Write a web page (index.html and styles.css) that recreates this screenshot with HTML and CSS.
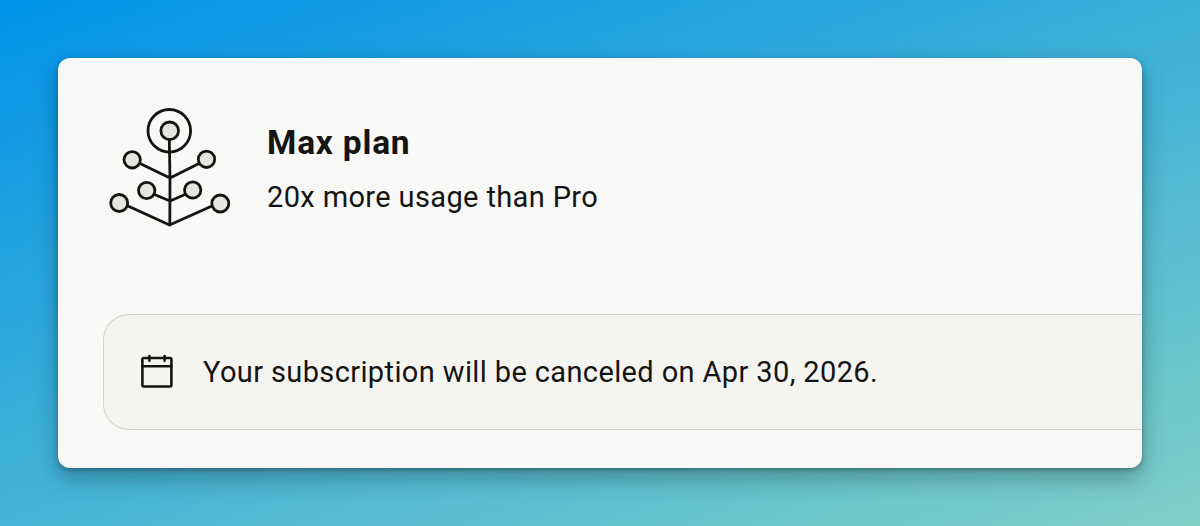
FILE: index.html
```html
<!DOCTYPE html>
<html lang="en">
<head>
	<meta charset="utf-8">
	<title>Max plan</title>
	<link rel="stylesheet" href="styles.css">
</head>
<body>
	<main class="card">
		<header class="plan">
			<svg class="plan-icon" viewBox="0 0 140 135" fill="none" stroke="#141412" stroke-width="2.8" stroke-linecap="round" stroke-linejoin="round">
				<path d="M69.3 40 70 78 69.8 125M40 63.5 70 78 98 64M54.5 94.5 70 101 85 94.5M28 106 69.5 125 112 106" />
				<circle cx="69.3" cy="30.8" r="21.3" />
				<g fill="#e6e5e2">
					<circle cx="69.7" cy="30.8" r="8.8" />
					<circle cx="32.2" cy="59.8" r="8.2" />
					<circle cx="106.5" cy="59.3" r="8.2" />
					<circle cx="46.7" cy="90.5" r="8.2" />
					<circle cx="92.7" cy="90" r="8.2" />
					<circle cx="19.2" cy="103" r="8.5" />
					<circle cx="120.3" cy="103.5" r="8.5" />
				</g>
			</svg>
			<div class="plan-text">
				<h1 class="plan-name">Max plan</h1>
				<p class="plan-usage">20x more usage than Pro</p>
			</div>
		</header>
		<section class="notice">
			<svg class="notice-icon" viewBox="0 0 34 36" fill="none" stroke="#141412" stroke-width="2.6" stroke-linecap="round" stroke-linejoin="round">
				<rect x="2.4" y="4" width="29" height="28.5" rx="1.5" />
				<path d="M2.4 12.2h29M9.4 2v4.8M24.6 2v4.8" />
			</svg>
			<p class="notice-text">Your subscription will be canceled on Apr 30, 2026.</p>
		</section>
	</main>
</body>
</html>
```

FILE: styles.css
```css
* {
	box-sizing: border-box;
}
body {
	margin: 0;
	height: 526px;
	padding: 58px;
	background: linear-gradient(160deg, #0093e9 0%, #80d0c7 100%);
	color: #141412;
	font-family: Roboto, "Liberation Sans", sans-serif;
}
h1,
p {
	margin: 0;
	white-space: nowrap;
}
.card {
	height: 410px;
	padding: 42px 0 0 42px;
	border-radius: 12px;
	background: #f8f8f6;
	box-shadow: 0 10px 24px rgba(0, 0, 0, 0.28), 0 2px 5px rgba(0, 0, 0, 0.25);
	overflow: hidden;
}
.plan {
	display: flex;
	gap: 27px;
}
.plan-icon {
	width: 140px;
	height: 135px;
}
.plan-text {
	padding-top: 20px;
}
.plan-name {
	font-size: 33.5px;
	font-weight: 700;
	line-height: 46px;
	letter-spacing: 0.8px;
}
.plan-usage {
	margin-top: 8px;
	font-size: 29px;
	line-height: 46px;
	letter-spacing: 0.37px;
}
.notice {
	display: flex;
	align-items: center;
	gap: 29px;
	height: 116px;
	margin: 79px 0 0 3px;
	padding-left: 36px;
	border: 1px solid #d2d2ce;
	border-right: 0;
	border-radius: 26px 0 0 26px;
	background: #f4f5f0;
}
.notice-icon {
	width: 34px;
	height: 36px;
}
.notice-text {
	font-size: 29px;
	line-height: 46px;
	letter-spacing: 0.38px;
}
```
